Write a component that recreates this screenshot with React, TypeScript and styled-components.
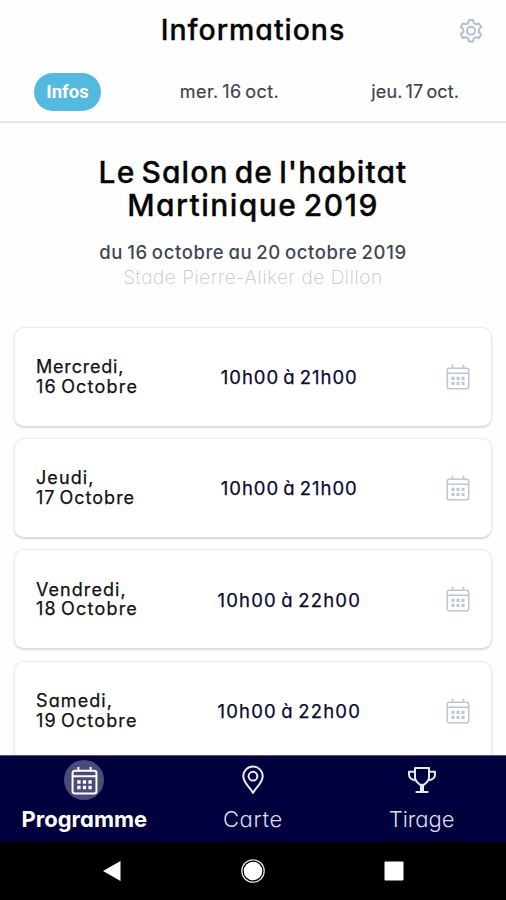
import React from "react";
import styled, { createGlobalStyle } from "styled-components";

const GlobalStyle = createGlobalStyle`
  * { box-sizing: border-box; }
  body {
    margin: 0;
    background: #fefefe;
    font-family: Inter, "Liberation Sans", sans-serif;
    font-feature-settings: "cv11", "calt" 0;
  }
  svg { display: block; }
`;

const Screen = styled.div`
  width: 506px;
  height: 900px;
  display: flex;
  flex-direction: column;
  overflow: hidden;
  background: #fefefe;
`;

const Header = styled.header`
  height: 60px;
  flex: none;
  display: grid;
  grid-template-columns: 60px 1fr 60px;
  align-items: center;
  padding-right: 10px;
  padding-left: 10px;
`;

const PageTitle = styled.h1`
  margin: 0;
  grid-column: 2;
  text-align: center;
  font-size: 28.5px;
  line-height: 58px;
  font-weight: 500;
  letter-spacing: 0.95px;
  color: #060606;
  white-space: nowrap;
  -webkit-text-stroke: 0.3px #060606;
`;

const SettingsButton = styled.div`
  justify-self: end;
  padding: 2px 12px 0 0;
  color: #b5bdd2;
`;

const Tabs = styled.nav`
  height: 63px;
  flex: none;
  display: grid;
  grid-template-columns: 67px 257px 1fr;
  align-items: center;
  padding: 2px 47px 0 34px;
  border-bottom: 2px solid #e6e6e6;
`;

const ActiveTab = styled.div`
  width: 67px;
  height: 38px;
  border-radius: 19px;
  background: #54b9df;
  color: #fff;
  font: 700 18.5px/39px Roboto, sans-serif;
  text-align: center;
`;

const Tab = styled.div<{ $spacing: number; $align: "center" | "right" }>`
  font-size: 18px;
  line-height: 36px;
  color: #3d444f;
  text-align: ${(p) => p.$align};
  letter-spacing: ${(p) => p.$spacing}px;
  word-spacing: -2px;
  white-space: nowrap;
  -webkit-text-stroke: 0.2px #3d444f;
`;

const Content = styled.main`
  flex: 1;
  min-height: 0;
  overflow: hidden;
  display: flex;
  flex-direction: column;
`;

const Intro = styled.section`
  height: 203.5px;
  flex: none;
  padding-top: 33px;
  text-align: center;
  white-space: nowrap;
`;

const EventLine = styled.div<{ $spacing: number }>`
  font-size: 30px;
  line-height: 32.5px;
  font-weight: 500;
  color: #060606;
  letter-spacing: ${(p) => p.$spacing}px;
  word-spacing: -3px;
  -webkit-text-stroke: 0.3px #060606;
`;

const EventDates = styled.div`
  margin-top: 19px;
  font-size: 18.5px;
  line-height: 25px;
  font-weight: 500;
  letter-spacing: 0.6px;
  word-spacing: -1.4px;
  color: #404856;
`;

const EventPlace = styled.div`
  font-size: 19px;
  line-height: 25px;
  font-weight: 200;
  letter-spacing: 0.56px;
  color: #c4c5cb;
`;

const CardList = styled.section`
  display: flex;
  flex-direction: column;
  gap: 11.4px;
  padding: 0 14px;
`;

const Card = styled.article`
  height: 100px;
  flex: none;
  display: grid;
  grid-template-columns: 150px 1fr 78px;
  align-items: center;
  padding: 0 20.5px 0 21px;
  border: 1.5px solid #ececec;
  border-bottom-color: #dcdcdc;
  border-radius: 10px;
  background: #fff;
  box-shadow: 0 1px 2px rgba(0, 0, 0, 0.16);
`;

const Day = styled.div`
  font-size: 18px;
  line-height: 19.5px;
  color: #111;
  white-space: nowrap;
  word-spacing: -2px;
  -webkit-text-stroke: 0.25px #111;
`;

const DayLine = styled.div<{ $spacing: number }>`
  letter-spacing: ${(p) => p.$spacing}px;
`;

const Hours = styled.div<{ $spacing: number }>`
  text-align: center;
  font-size: 18.5px;
  color: #0b0930;
  padding-top: 1px;
  letter-spacing: ${(p) => p.$spacing}px;
  word-spacing: -2px;
  white-space: nowrap;
  -webkit-text-stroke: 0.25px #0b0930;
`;

const CardIcon = styled.div`
  justify-self: end;
  color: #bfc5d8;
`;

const BottomNav = styled.nav`
  height: 87px;
  flex: none;
  display: grid;
  grid-template-columns: repeat(3, 1fr);
  background: #00003f;
  border-top: 1px solid #55557c;
`;

const NavItem = styled.div`
  display: flex;
  flex-direction: column;
  align-items: center;
  padding-top: 4px;
  color: #fff;
`;

const NavIcon = styled.div<{ $active?: boolean }>`
  width: 40px;
  height: 40px;
  border-radius: 50%;
  display: grid;
  place-items: center;
  background: ${(p) => (p.$active ? "#4b4a7d" : "transparent")};
`;

const NavLabel = styled.div<{ $active?: boolean; $spacing: number }>`
  font-size: 22px;
  line-height: 38px;
  font-weight: ${(p) => (p.$active ? 700 : 300)};
  color: ${(p) => (p.$active ? "#fff" : "#dedeea")};
  letter-spacing: ${(p) => p.$spacing}px;
`;

const SystemBar = styled.footer`
  height: 58px;
  flex: none;
  display: grid;
  grid-template-columns: repeat(3, 141px);
  justify-content: center;
  align-items: center;
  justify-items: center;
  background: #000;
`;

const GearIcon = () => (
  <svg width="26" height="26" viewBox="0 0 26 26" fill="none" stroke="currentColor" strokeWidth="2" strokeLinejoin="round">
    <path d="M10.9 2h4.2l.7 3.2 2.2 1.2 3.1-1 2.1 3.7-2.4 2.2v2.9l2.4 2.1-2.1 3.7-3.1-1-2.2 1.3-.7 3.2h-4.2l-.7-3.2L8 19l-3.1 1-2.1-3.7 2.4-2.1v-2.9L2.8 9.1l2.1-3.7 3.1 1 2.2-1.2z" />
    <circle cx="13" cy="12.8" r="4" />
  </svg>
);

const CalendarIcon = ({ size, weight }: { size: number; weight: number }) => (
  <svg width={size} height={size} viewBox="0 0 26 26" fill="none" stroke="currentColor" strokeWidth={weight}>
    <rect x="2.3" y="4.3" width="21.4" height="20.4" rx="2" />
    <path d="M2.3 9.2h21.4M7.5 .8v4.2M18.5 .8v4.2" />
    <path d="M6.5 14.3h3M11.5 14.3h3M16.5 14.3h3M6.5 19.3h3M11.5 19.3h3M16.5 19.3h3" strokeWidth="3.2" />
  </svg>
);

const PinIcon = () => (
  <svg width="24" height="30" viewBox="0 0 24 30" fill="none" stroke="#e9e9f1" strokeWidth="2" strokeLinejoin="round">
    <path d="M12 28C10.5 24 2.3 18 2.3 11.2a9.7 9.7 0 0 1 19.4 0C21.7 18 13.5 24 12 28z" />
    <circle cx="12" cy="11.2" r="4.4" />
  </svg>
);

const TrophyIcon = () => (
  <svg width="30" height="28" viewBox="0 0 30 28" fill="none" stroke="#e9e9f1" strokeWidth="2" strokeLinejoin="round">
    <path d="M8 2h14v9.5c0 3.5-3 5.3-5 7.2h-4c-2-1.9-5-3.7-5-7.2z" />
    <path d="M8 5.8H2v2.4c0 3.5 3 5.6 6.6 6M22 5.8h6v2.4c0 3.5-3 5.6-6.6 6M14 18.7v6.8M16 18.7v6.8M8.6 26h12.8" />
  </svg>
);

const days = [
  { name: "Mercredi,", date: "16 Octobre", hours: "10h00 à 21h00", n: 0.8, d: 1.2, h: 0.96 },
  { name: "Jeudi,", date: "17 Octobre", hours: "10h00 à 21h00", n: 1.1, d: 1, h: 0.96 },
  { name: "Vendredi,", date: "18 Octobre", hours: "10h00 à 22h00", n: 1.05, d: 1.2, h: 1.2 },
  { name: "Samedi,", date: "19 Octobre", hours: "10h00 à 22h00", n: 1.1, d: 1.15, h: 1.2 },
];

export default function App() {
  return (
    <>
      <GlobalStyle />
      <Screen>
        <Header>
          <PageTitle>Informations</PageTitle>
          <SettingsButton>
            <GearIcon />
          </SettingsButton>
        </Header>
        <Tabs>
          <ActiveTab>Infos</ActiveTab>
          <Tab $align="center" $spacing={0.45}>mer. 16 oct.</Tab>
          <Tab $align="right" $spacing={0.1}>jeu. 17 oct.</Tab>
        </Tabs>
        <Content>
          <Intro>
            <EventLine $spacing={1.1}>Le Salon de l'habitat</EventLine>
            <EventLine $spacing={1.45}>Martinique 2019</EventLine>
            <EventDates>du 16 octobre au 20 octobre 2019</EventDates>
            <EventPlace>Stade Pierre-Aliker de Dillon</EventPlace>
          </Intro>
          <CardList>
            {days.map((day) => (
              <Card key={day.date}>
                <Day>
                  <DayLine $spacing={day.n}>{day.name}</DayLine>
                  <DayLine $spacing={day.d}>{day.date}</DayLine>
                </Day>
                <Hours $spacing={day.h}>{day.hours}</Hours>
                <CardIcon>
                  <CalendarIcon size={26} weight={1.6} />
                </CardIcon>
              </Card>
            ))}
          </CardList>
        </Content>
        <BottomNav>
          <NavItem>
            <NavIcon $active>
              <CalendarIcon size={29} weight={1.8} />
            </NavIcon>
            <NavLabel $active $spacing={0}>Programme</NavLabel>
          </NavItem>
          <NavItem>
            <NavIcon>
              <PinIcon />
            </NavIcon>
            <NavLabel $spacing={0.7}>Carte</NavLabel>
          </NavItem>
          <NavItem>
            <NavIcon>
              <TrophyIcon />
            </NavIcon>
            <NavLabel $spacing={0}>Tirage</NavLabel>
          </NavItem>
        </BottomNav>
        <SystemBar>
          <svg width="20" height="22" viewBox="0 0 20 22">
            <path d="M1 11 18.5 1v20z" fill="#fff" />
          </svg>
          <svg width="26" height="26" viewBox="0 0 26 26">
            <circle cx="13" cy="13" r="11.2" fill="none" stroke="#ddd" strokeWidth="1.3" />
            <circle cx="13" cy="13" r="9.3" fill="#fff" />
          </svg>
          <svg width="20" height="20" viewBox="0 0 20 20">
            <rect x=".5" y=".5" width="19" height="19" rx="1" fill="#fff" />
          </svg>
        </SystemBar>
      </Screen>
    </>
  );
}
